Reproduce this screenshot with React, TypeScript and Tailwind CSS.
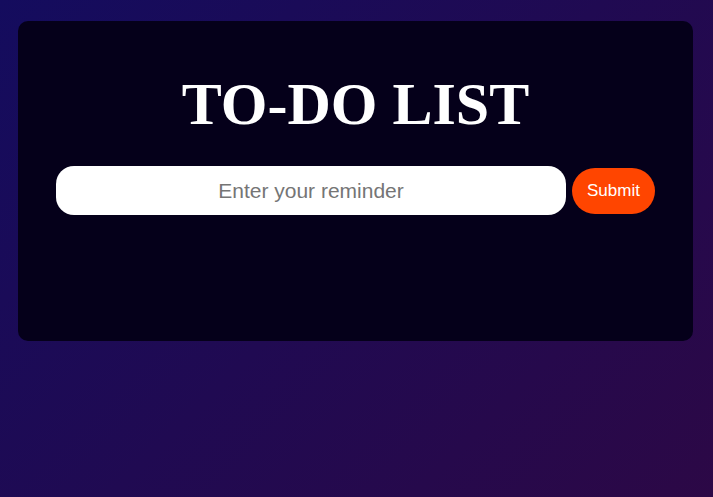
export default function App() {
  return (
    <div className="w-[713px] h-[497px] bg-[linear-gradient(135deg,#140c5e,#2c0846)] pt-[21px] pl-[18px] overflow-hidden">
      <div className="w-[675px] h-[320px] rounded-[10px] bg-[#05001a] pt-[48px] px-[38px]">
        <h1 className="text-center text-white font-bold text-[60px] leading-[70px] font-['Liberation_Serif',serif]">
          TO-DO LIST
        </h1>
        <div className="mt-[27px] flex items-center gap-[6px]">
          <input
            type="text"
            placeholder="Enter your reminder"
            className="flex-1 min-w-0 h-[49px] rounded-[18px] bg-white text-center text-[21px] outline-none placeholder:text-[#757575] font-['Liberation_Sans',Arial,sans-serif]"
          />
          <button className="w-[83px] h-[46px] rounded-[23px] bg-[#ff4500] text-white text-[17px] font-['Liberation_Sans',Arial,sans-serif]">
            Submit
          </button>
        </div>
      </div>
    </div>
  );
}
